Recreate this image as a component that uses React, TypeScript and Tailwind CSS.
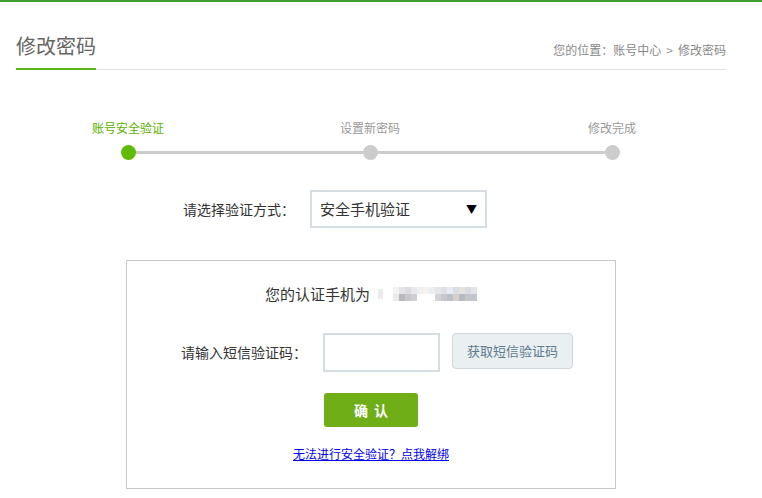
import React from 'react'

const font = { fontFamily: '"Noto Sans CJK SC", "Noto Sans", sans-serif' }

const steps = [
  { label: '账号安全验证', active: true },
  { label: '设置新密码', active: false },
  { label: '修改完成', active: false },
]

// pixelated blur over the phone number
const blurTop = ['#f2f2f2', '#e6e6e8', '#dcdde0', '#e8e8ea', '#eef0f2', '#f6f2ee', '#eceef2', '#e4e6ea', '#dde0e4', '#e8ecf2', '#dadde2', '#e6e2de', '#d8dbe0', '#e2e4e6']
const blurBottom = ['#eceae6', '#b8b8c2', '#c8c8cc', '#cfcfd2', '#ffffff', '#ffffff', '#ffffff', '#d4d4d8', '#c6c8cc', '#bcc0c8', '#d8d0c6', '#b6bac2', '#c4c6ca', '#c0c6d0']

function PhoneBlur() {
  return (
    <div className="flex items-center gap-[10px] ml-[8px]">
      <div className="w-[5px] h-[10px] bg-[#ececec]" />
      <div className="flex flex-col">
        <div className="flex">
          {blurTop.map((c, i) => (
            <div key={i} className="w-[6px] h-[7px]" style={{ background: c }} />
          ))}
        </div>
        <div className="flex">
          {blurBottom.map((c, i) => (
            <div key={i} className="w-[6px] h-[7px]" style={{ background: c }} />
          ))}
        </div>
      </div>
    </div>
  )
}

export default function App() {
  return (
    <div className="w-full h-[498px] bg-white overflow-hidden" style={font}>
      {/* top bar */}
      <div className="h-[2px] bg-[#3c9e2c]" />

      {/* header */}
      <div className="ml-[16px] w-[710px] pt-[30px] flex justify-between items-end border-b border-[#dbe1e6]">
        <div className="w-[80px] pb-[8px] border-b-2 border-[#5cb515] -mb-px text-[20px] leading-[28px] text-[#666]">
          修改密码
        </div>
        <div className="pb-[10px] text-[12px] leading-[18px] text-[#888]">
          您的位置：账号中心<span className="mx-[5px] text-[#999]">&gt;</span>修改密码
        </div>
      </div>

      {/* steps */}
      <div className="ml-[7px] w-[726px] mt-[49px] grid grid-cols-3">
        {steps.map((s, i) => (
          <div key={s.label} className="flex flex-col items-center">
            <div className={`text-[12px] leading-[18px] ${s.active ? 'text-[#5cb000]' : 'text-[#999]'}`}>
              {s.label}
            </div>
            <div className="mt-[8px] w-full flex items-center">
              <div className={`flex-1 h-[3px] ${i === 0 ? 'bg-transparent' : 'bg-[#cccccc]'}`} />
              <div className={`w-[15px] h-[15px] rounded-full ${s.active ? 'bg-[#5fbb06]' : 'bg-[#cccccc]'}`} />
              <div className={`flex-1 h-[3px] ${i === 2 ? 'bg-transparent' : 'bg-[#cccccc]'}`} />
            </div>
          </div>
        ))}
      </div>

      {/* verification method */}
      <div className="ml-[183px] mt-[30px] flex items-center">
        <div className="text-[14px] text-[#333]">请选择验证方式：</div>
        <div className="ml-[15px] w-[177px] h-[38px] border-2 border-[#d6dde2] flex items-center justify-between pl-[8px] pr-[8px]">
          <span className="text-[15px] text-[#333]">安全手机验证</span>
          <span className="text-[11px] text-black">▼</span>
        </div>
      </div>

      {/* card */}
      <div className="ml-[126px] mt-[32px] w-[490px] h-[229px] border border-[#c8c8c8] flex flex-col items-center">
        <div className="mt-[23px] flex items-center">
          <span className="text-[15px] leading-[20px] text-[#333]">您的认证手机为</span>
          <PhoneBlur />
        </div>

        <div className="mt-[29px] w-full flex items-start pl-[54px]">
          <div className="h-[39px] flex items-center text-[14px] text-[#333]">请输入短信验证码：</div>
          <div className="ml-[16px] w-[117px] h-[39px] border-2 border-[#d6dde2]" />
          <button className="ml-[12px] w-[121px] h-[36px] rounded-[4px] bg-[#eaeff2] border border-[#cfd7dd] text-[13px] text-[#5e7b8d]">
            获取短信验证码
          </button>
        </div>

        <button className="mt-[21px] w-[94px] h-[34px] rounded-[3px] bg-[#6fae17] text-white text-[14px] font-bold tracking-[6px] pl-[6px]">
          确认
        </button>

        <a href="#" className="mt-[19px] text-[12px] leading-[16px] text-[#0000ee] underline">
          无法进行安全验证？点我解绑
        </a>
      </div>
    </div>
  )
}
